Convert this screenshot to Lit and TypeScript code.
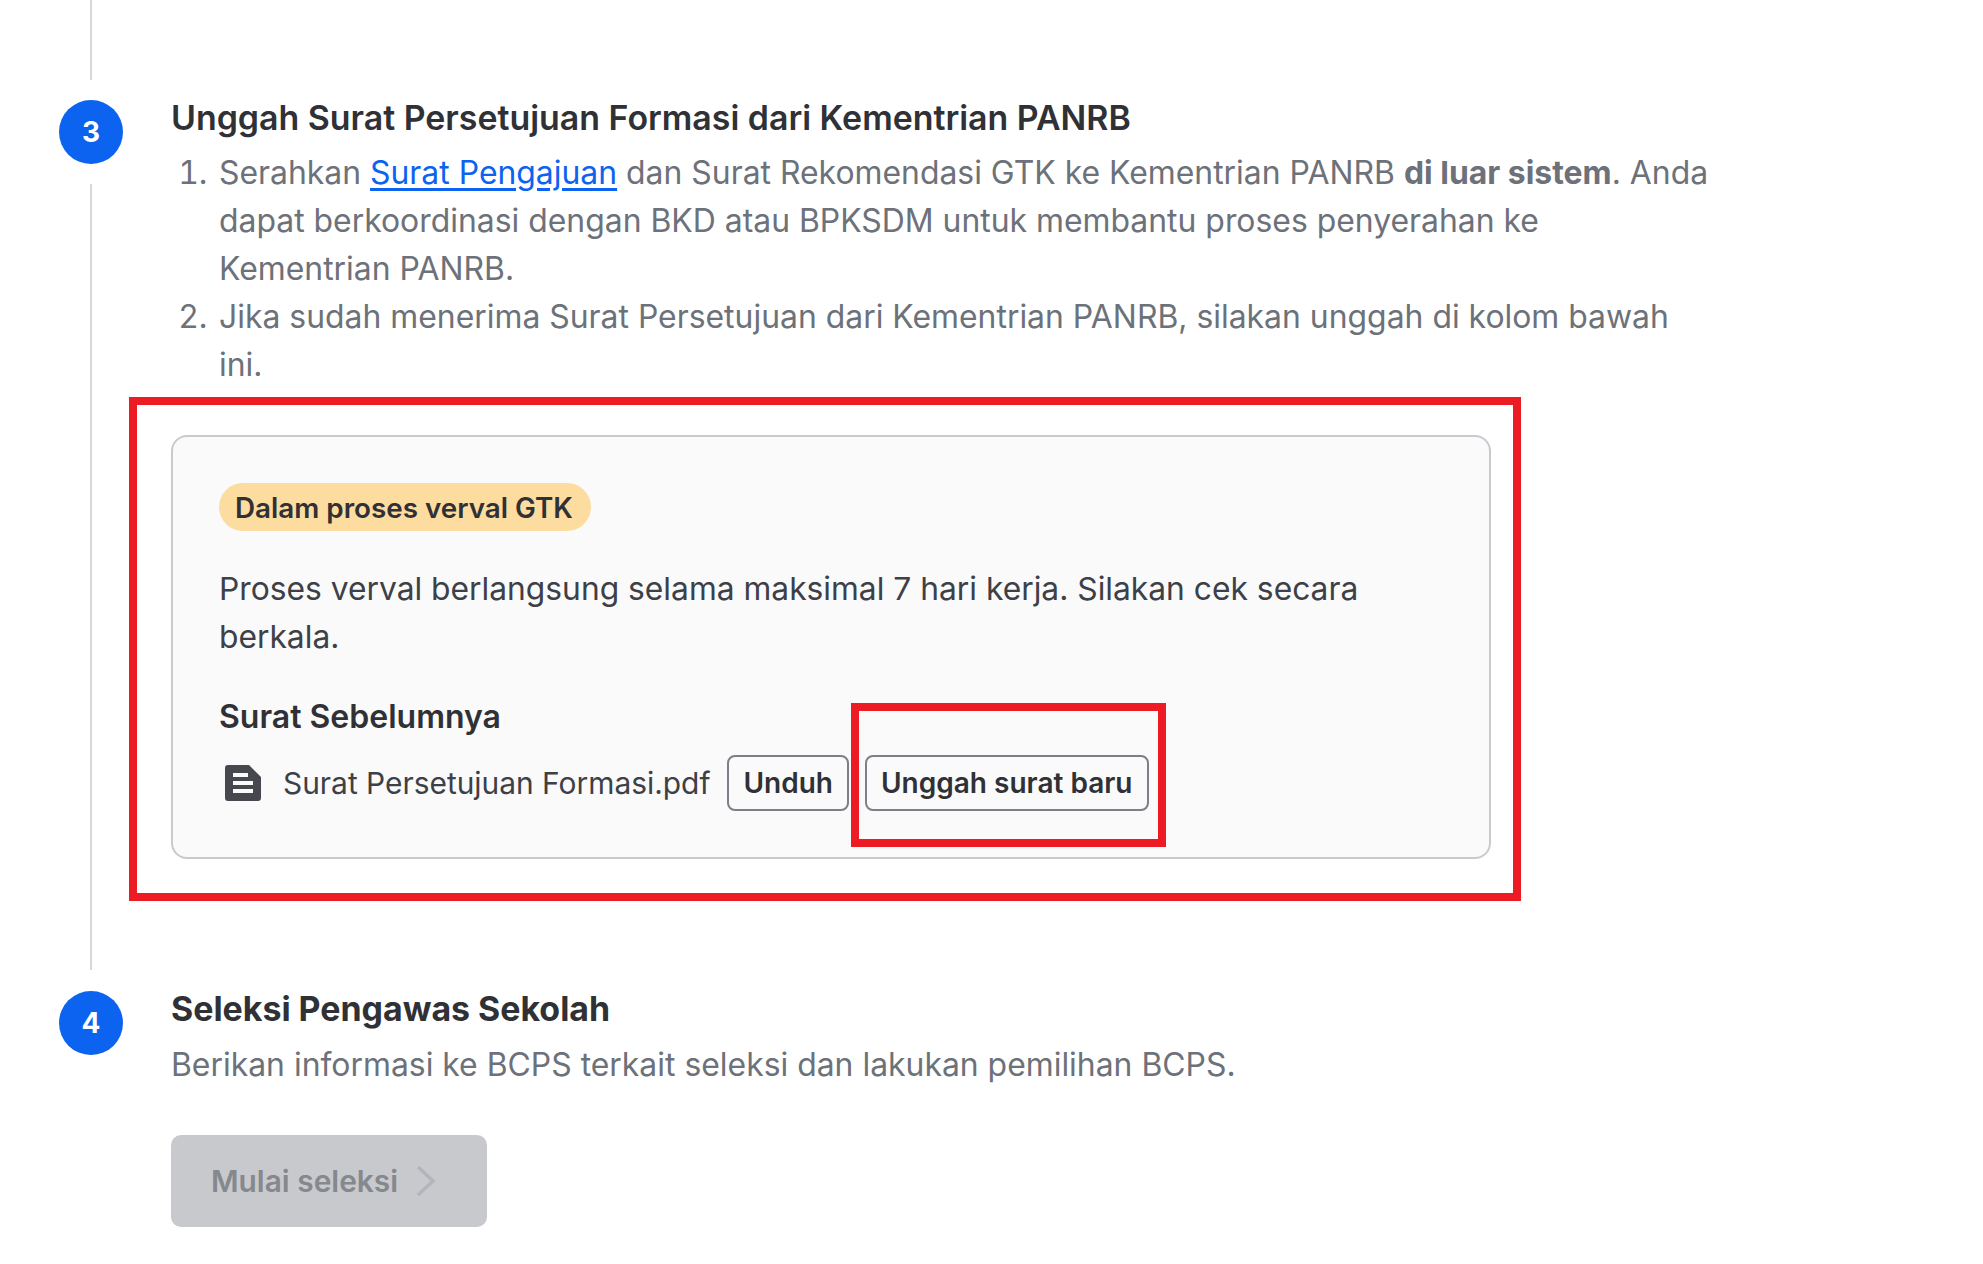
import { LitElement, html, css } from "lit";
import { customElement } from "lit/decorators.js";

@customElement("app-root")
export class AppRoot extends LitElement {
  static styles = css`
    :host { display: block; width: 1983px; height: 1264px; background: #fff; overflow: hidden; font-family: Inter, "Noto Sans", sans-serif; font-size: 31.9px; line-height: 48px; color: #6d7179; padding-left: 59px; box-sizing: border-box; }
    .step { display: grid; grid-template-columns: 64px 1fr; column-gap: 48px; }
    .step3 { height: 970px; }
    .step4 { margin-top: 15px; }
    .rail { display: flex; flex-direction: column; align-items: center; }
    .line { width: 2px; background: #d6d7da; }
    .line-top { height: 80px; margin-bottom: 20px; }
    .line-rest { flex: 1; margin-top: 20px; }
    .rail4 { padding-top: 6px; }
    .circle { width: 64px; height: 64px; flex: none; border-radius: 50%; background: #0b63f0; color: #fff; font-size: 28px; font-weight: 700; display: flex; align-items: center; justify-content: center; }
    .content3 { padding-top: 94px; width: 1548px; }
    h2 { margin: 0; font-size: 33.9px; line-height: 48px; font-weight: 600; color: #2f3136; }
    .step4 h2 { font-weight: 700; }
    ol { margin: 7px 0 0; padding: 0 0 0 48px; }
    li::marker { content: counter(list-item) ".\\2009\\2009"; }
    a { color: #0b63f0; text-decoration: underline; text-underline-offset: 4px; }
    strong { font-weight: 700; }
    .card { position: relative; margin-top: 46px; width: 1320px; height: 424px; box-sizing: border-box; border: 2px solid #c9cad0; border-radius: 16px; background: #fafafa; padding: 46px; color: #3d4047; }
    .badge { display: inline-block; height: 48px; line-height: 50px; padding: 0 18px 0 16px; border-radius: 24px; background: #fddc9f; color: #2f3136; font-size: 27.8px; font-weight: 600; vertical-align: top; }
    .badge-row { height: 48px; }
    .note { margin: 34px 0 0; font-size: 31.78px; }
    h3 { margin: 32px 0 0; font-size: 32px; line-height: 48px; font-weight: 600; color: #2f3136; }
    .file { display: flex; align-items: center; margin-top: 14px; height: 56px; font-size: 29.9px; }
    .icon { width: 36px; height: 36px; margin: 0 22px 0 6px; flex: none; }
    .btn { box-sizing: border-box; height: 56px; margin-left: 17px; padding: 0 14px; border: 2px solid #7c7f87; border-radius: 8px; background: transparent; font: 600 28px/52px Inter, sans-serif; color: #2f3136; }
    .btn + .btn { margin-left: 16px; }
    .mark { position: absolute; box-sizing: border-box; border: 8px solid #ed1c24; pointer-events: none; }
    .mark-outer { left: -44px; top: -40px; right: -32px; bottom: -44px; }
    .mark-inner { left: 678px; top: 266px; width: 315px; height: 144px; }
    .desc { margin: 8px 0 0; }
    .start { display: inline-flex; align-items: center; gap: 18px; box-sizing: border-box; margin-top: 46px; height: 92px; width: 316px; padding-left: 40px; border-radius: 10px; background: #c8c9cd; color: #85888d; font-size: 29.9px; font-weight: 600; }
    .start svg { width: 20px; height: 32px; flex: none; }
  `;

  render() {
    return html`
      <div class="step step3">
        <div class="rail">
          <div class="line line-top"></div>
          <div class="circle">3</div>
          <div class="line line-rest"></div>
        </div>
        <div class="content3">
          <h2>Unggah Surat Persetujuan Formasi dari Kementrian PANRB</h2>
          <ol>
            <li>Serahkan <a href="#">Surat Pengajuan</a> dan Surat Rekomendasi GTK ke Kementrian PANRB <strong>di luar sistem</strong>. Anda dapat berkoordinasi dengan BKD atau BPKSDM untuk membantu proses penyerahan ke Kementrian PANRB.</li>
            <li>Jika sudah menerima Surat Persetujuan dari Kementrian PANRB, silakan unggah di kolom bawah ini.</li>
          </ol>
          <div class="card">
            <div class="badge-row"><span class="badge">Dalam proses verval GTK</span></div>
            <p class="note">Proses verval berlangsung selama maksimal 7 hari kerja. Silakan cek secara berkala.</p>
            <h3>Surat Sebelumnya</h3>
            <div class="file">
              <svg class="icon" viewBox="0 0 36 36" aria-hidden="true"><path fill="#47484f" fill-rule="evenodd" d="M3 0H24L36 12V33a3 3 0 0 1-3 3H3a3 3 0 0 1-3-3V3a3 3 0 0 1 3-3ZM8 8V12H23V8ZM8 16V20H28V16ZM8 24V28H28V24Z"/></svg>
              <span>Surat Persetujuan Formasi.pdf</span>
              <button class="btn">Unduh</button>
              <button class="btn">Unggah surat baru</button>
            </div>
            <div class="mark mark-outer"></div>
            <div class="mark mark-inner"></div>
          </div>
        </div>
      </div>
      <div class="step step4">
        <div class="rail rail4"><div class="circle">4</div></div>
        <div>
          <h2>Seleksi Pengawas Sekolah</h2>
          <p class="desc">Berikan informasi ke BCPS terkait seleksi dan lakukan pemilihan BCPS.</p>
          <div class="start">Mulai seleksi
            <svg viewBox="0 0 20 32" aria-hidden="true"><path d="M2 2L17 16L2 30" fill="none" stroke="#b4b5ba" stroke-width="3.5"/></svg>
          </div>
        </div>
      </div>
    `;
  }
}
